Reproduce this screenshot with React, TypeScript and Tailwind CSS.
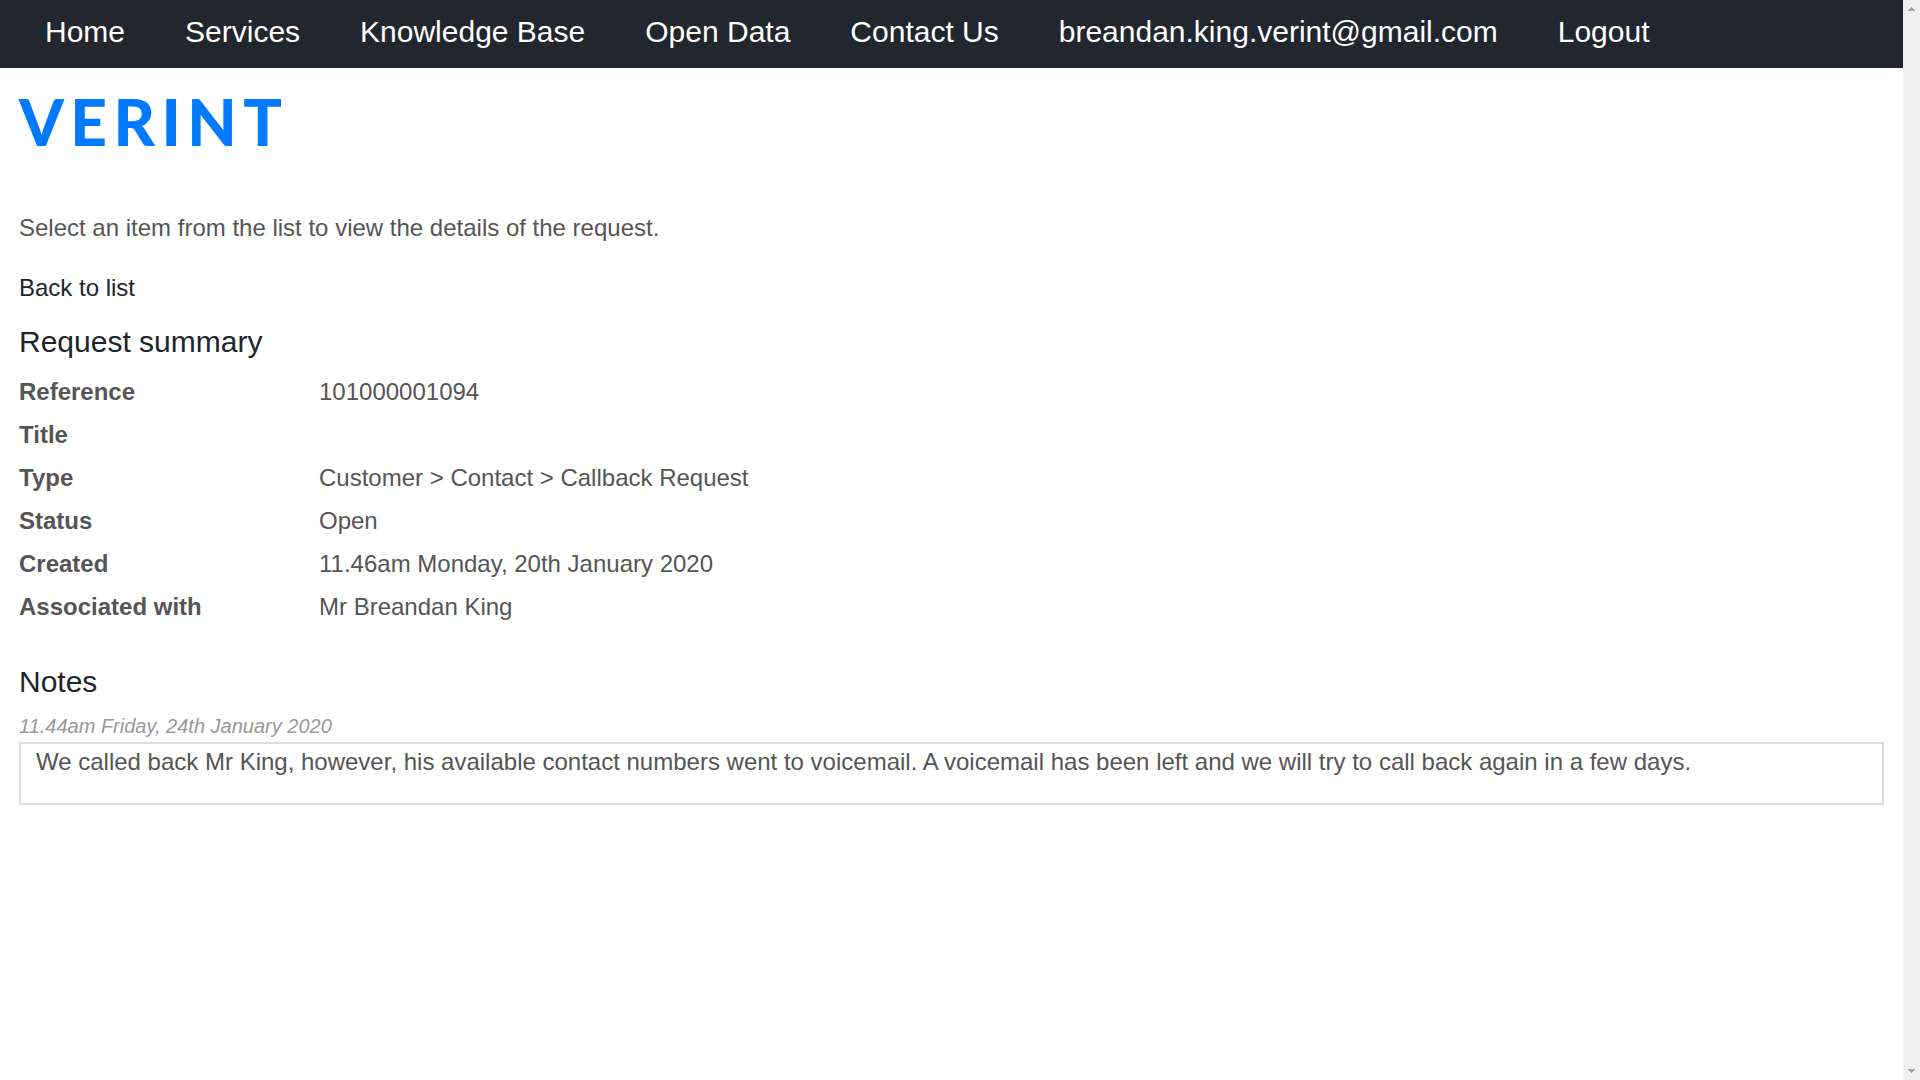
const navLinks = [
  'Home',
  'Services',
  'Knowledge Base',
  'Open Data',
  'Contact Us',
  'breandan.king.verint@gmail.com',
  'Logout',
];

const summary = [
  { label: 'Reference', value: '101000001094' },
  { label: 'Title', value: '' },
  { label: 'Type', value: 'Customer > Contact > Callback Request' },
  { label: 'Status', value: 'Open' },
  { label: 'Created', value: '11.46am Monday, 20th January 2020' },
  { label: 'Associated with', value: 'Mr Breandan King' },
];

function NavBar() {
  return (
    <nav className="bg-[#22262e] px-[45px] pt-2 pb-3">
      <ul className="flex flex-wrap gap-x-[60px] text-[30px] leading-12 text-white">
        {navLinks.map((label) => (
          <li key={label}>
            <a href="#">{label}</a>
          </li>
        ))}
      </ul>
    </nav>
  );
}

function Logo() {
  return (
    <a
      href="#"
      className="block w-fit font-['Lato','Liberation_Sans',sans-serif] text-[64px] leading-16 font-black tracking-widest text-[#007bff]"
    >
      VERINT
    </a>
  );
}

function RequestSummary() {
  return (
    <section>
      <h2 className="mt-[18px] text-[30px] leading-9 text-[#212529]">Request summary</h2>
      <table className="mt-2.5 text-left">
        <tbody>
          {summary.map(({ label, value }) => (
            <tr key={label} className="h-[43px] leading-9">
              <th scope="row" className="w-[300px] p-0 font-bold">
                {label}
              </th>
              <td className="p-0">{value}</td>
            </tr>
          ))}
        </tbody>
      </table>
    </section>
  );
}

function Notes() {
  return (
    <section>
      <h2 className="mt-9 text-[30px] leading-9 text-[#212529]">Notes</h2>
      <time dateTime="2020-01-24T11:44" className="mt-2.5 block text-xl leading-8 text-[#999999] italic">
        11.44am Friday, 24th January 2020
      </time>
      <div className="border-2 border-[#dcdcdc] px-[15px] pb-6">
        <p className="leading-[35px]">
          We called back Mr King, however, his available contact numbers went to voicemail. A voicemail has been left and
          we will try to call back again in a few days.
        </p>
      </div>
    </section>
  );
}

function ScrollTrack() {
  return (
    <div aria-hidden="true" className="flex w-[17px] shrink-0 flex-col items-center justify-between bg-[#f0f0f0] py-[7px]">
      <svg className="h-1 w-[7px]" viewBox="0 0 7 4" fill="#a3a3a3" shapeRendering="crispEdges">
        <path d="M3 0h1v1h1v1h1v1h1v1H0V3h1V2h1V1h1z" />
      </svg>
      <svg className="h-1 w-[7px]" viewBox="0 0 7 4" fill="#a3a3a3" shapeRendering="crispEdges">
        <path d="M0 0h7v1H6v1H5v1H4v1H3V3H2V2H1V1H0z" />
      </svg>
    </div>
  );
}

export default function App() {
  return (
    <div className="flex min-h-screen bg-white font-['Liberation_Sans',Arial,sans-serif] text-2xl text-[#555555]">
      <div className="min-w-0 flex-1">
        <NavBar />
        <main className="px-[19px] pt-[22px]">
          <Logo />
          <p className="mt-14 leading-9">Select an item from the list to view the details of the request.</p>
          <a href="#" className="mt-6 block w-fit leading-9 text-[#212529]">
            Back to list
          </a>
          <RequestSummary />
          <Notes />
        </main>
      </div>
      <ScrollTrack />
    </div>
  );
}
